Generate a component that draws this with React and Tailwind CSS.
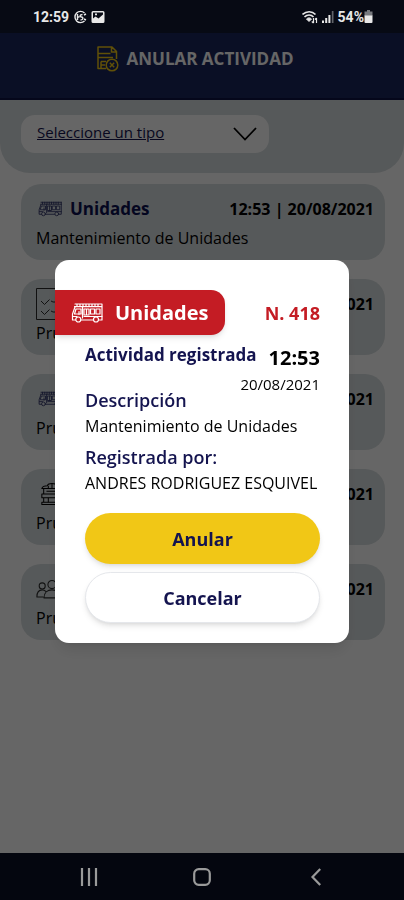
import React, { useState } from 'react';

const ACTIVITIES = [
  { id: 418, type: 'Unidades', icon: 'truck', time: '12:53', date: '20/08/2021', text: 'Mantenimiento de Unidades' },
  { id: 417, type: 'Tareas', icon: 'checklist', time: '12:50', date: '20/08/2021', text: 'Prueba' },
  { id: 416, type: 'Unidades', icon: 'truck', time: '12:47', date: '20/08/2021', text: 'Prueba' },
  { id: 415, type: 'Equipo', icon: 'station', time: '12:45', date: '20/08/2021', text: 'Prueba' },
  { id: 414, type: 'Personal', icon: 'people', time: '12:40', date: '20/08/2021', text: 'Prueba' },
];

function TruckIcon({ className }) {
  return (
    <svg viewBox="0 0 32 20" fill="none" stroke="currentColor" strokeWidth="1.2" strokeLinejoin="round" strokeLinecap="round" className={className}>
      <path d="M4 1h27M3.500 3.600H31M6 1v2.600M9 1v2.600M12 1v2.600M15 1v2.600M18 1v2.600M21 1v2.600M24 1v2.600M27 1v2.600M31 1v2.600" />
      <path d="M4 4 1.500 11v6h3M10 17h12M28 17h3V4" />
      <path d="M5 6h5v5H3.500zM13 6h5v6h-5zM19.500 6h4v5h-4zM25 6h4v5h-4zM11.500 4v11M2 13.500h4M13 13.500h18M8 8.500v3M15.500 6v6" />
      <circle cx="7.3" cy="16.5" r="2.500" />
      <circle cx="25" cy="16.5" r="2.500" />
    </svg>
  );
}

function ChecklistIcon({ className }) {
  return (
    <svg viewBox="0 0 32 32" fill="none" stroke="currentColor" strokeWidth="1" className={className}>
      <path d="M.5.5h31v31H.5z" />
      <path d="m5 13 3.500 3.500 5-5M5 23l3.500 3.500 5-5M15 13l2 1h10M15 23l2 1h10" />
    </svg>
  );
}

function StationIcon({ className }) {
  return (
    <svg viewBox="0 0 26 26" fill="none" stroke="currentColor" strokeWidth="1.1" strokeLinejoin="round" className={className}>
      <path d="M2 7c1-3 4-3 6-3 1-3 9-3 10 0 2 0 5 0 6 3zM4 7v6h18V7M2 13h22v4H2zM4 17v5h18v-5M2 22h22v2.500H2z" />
      <path d="M9 4v3M13 2v5M17 4v3M7 10h12M9 17v5M17 17v5" />
    </svg>
  );
}

function PeopleIcon({ className }) {
  return (
    <svg viewBox="0 0 36 22" fill="none" stroke="currentColor" strokeWidth="1.200" strokeLinecap="round" strokeLinejoin="round" className={className}>
      <circle cx="7" cy="7.5" r="3.4" />
      <circle cx="18" cy="6" r="4.6" />
      <circle cx="29" cy="7.5" r="3.4" />
      <path d="M9 21c0-6 4-9 9-9s9 3 9 9zM8 20H1c0-5 2-8 6-8 2 0 3 .6 4 1.6M28 20h7c0-5-2-8-6-8-2 0-3 .6-4 1.6" />
    </svg>
  );
}

function DocumentCancelIcon({ className }) {
  return (
    <svg viewBox="0 0 22 26" fill="none" stroke="currentColor" strokeWidth="1.5" strokeLinejoin="round" className={className}>
      <path d="M9 22.500H1V1h14l4.500 4.500V13M14.500 1v5h5M1 7.500h12.500M1 11.500h15M4 15.500h5M4 19h4M4 15.500v7" />
      <circle cx="15" cy="19" r="5.8" />
      <path d="m12.8 16.8 4.4 4.4m0-4.4-4.4 4.4" />
    </svg>
  );
}

function ActivityIcon({ name }) {
  if (name === 'checklist') return <ChecklistIcon className="size-8 opacity-80" />;
  if (name === 'station') return <StationIcon className="ml-1 size-6" />;
  if (name === 'people') return <PeopleIcon className="h-5 w-8 opacity-80" />;
  return <TruckIcon className="ml-0.5 h-4 w-6 text-[#0b1150] opacity-80" />;
}

function StatusBar() {
  return (
    <div className="relative z-20 flex h-[33px] items-center justify-between bg-[#070a14] pr-[31px] pl-[33px] font-[Roboto,sans-serif] text-sm font-bold text-[#e8e8e8]">
      <div className="flex items-center gap-1">
        <span>12:59</span>
        <svg viewBox="0 0 14 14" fill="none" stroke="currentColor" strokeWidth="1.4" className="size-3.5">
          <path d="M11.5 3A5.6 5.6 0 1 0 11.5 11M4.5 4v6M4.5 7h2M9.5 4.5c-3 0-3 2.5-1 2.5s2 3-1 3M11 5l2-1M11 9l2 1" />
        </svg>
        <svg viewBox="0 0 14 14" className="size-3.5">
          <path fill="currentColor" fillRule="evenodd" d="M2 1h10a1.500 1.500 0 0 1 1.500 1.500v9A1.500 1.500 0 0 1 12 13H2A1.500 1.500 0 0 1 .5 11.500v-9A1.500 1.500 0 0 1 2 1zm0 1.500v6l2.500-2L7.500 8.500l4.500-4v-2zM4 3.500h2v1.700H4z" />
        </svg>
      </div>
      <div className="flex items-center gap-1">
        <svg viewBox="0 0 16 14" fill="none" stroke="currentColor" strokeWidth="1.700" className="h-3.5 w-4">
          <path d="M.5 4.500c4-3.700 9.500-3.700 13 0M2.500 7c2.700-2.500 6.500-2.500 9 0" />
          <path d="M4.500 9c1.500-1.500 3.500-1.500 5 0L7 11.500z" fill="currentColor" strokeWidth="1" />
          <path d="M11.500 8v5M9.800 11.500l1.700 1.700M14.500 13V8M13 9.500 14.500 8" strokeWidth="1.200" />
        </svg>
        <svg viewBox="0 0 12 12" fill="currentColor" className="size-3">
          <path d="M0 9.500h2V12H0zM3.200 7h2v5h-2zM6.400 4h2v8h-2z" />
          <path d="M9.800 0h1.700v12H9.800z" opacity=".4" />
        </svg>
        <div className="flex items-center">
          <span>54%</span>
          <svg viewBox="0 0 9 13" fill="currentColor" className="h-[13px] w-[9px]">
            <path d="M3 0h3v1.500h2.500V6H.5V1.500H3z" opacity=".5" />
            <path d="M.5 5.500h8V12a1 1 0 0 1-1 1h-6a1 1 0 0 1-1-1z" />
          </svg>
        </div>
      </div>
    </div>
  );
}

function ActivityCard({ activity }) {
  return (
    <li className="h-[76px] rounded-[20px] bg-[#d8dee0] pr-[11px] pl-[15px]">
      <div className="flex h-[50px] items-center justify-between">
        <div className="flex items-center gap-2">
          <ActivityIcon name={activity.icon} />
          <h2 className="text-[17px] font-bold text-[#0b1150]">{activity.type}</h2>
        </div>
        <p className="text-base font-bold">
          {activity.time} | {activity.date}
        </p>
      </div>
      <p className="-mt-2 text-base leading-6">{activity.text}</p>
    </li>
  );
}

function CancelModal({ activity, onClose }) {
  return (
    <div className="fixed inset-0 z-10 flex items-center justify-center bg-black/60 px-[55px] pt-[3px]">
      <div role="dialog" aria-modal="true" aria-label="Anular actividad" className="w-full max-w-sm rounded-[14px] bg-white pt-[30px] pb-5 shadow-lg">
        <div className="flex items-center justify-between pr-[29px]">
          <div className="flex h-[45px] items-center gap-3 rounded-r-[14px] bg-[#c41c24] px-4 text-white shadow-md">
            <TruckIcon className="h-5 w-8" />
            <span className="text-xl font-bold">{activity.type}</span>
          </div>
          <span className="text-lg font-bold text-[#c41c24]">N. {activity.id}</span>
        </div>

        <div className="pr-[29px] pl-[30px]">
          <div className="mt-2 flex items-start justify-between">
            <h3 className="text-[17px] leading-6 font-bold whitespace-nowrap text-[#14144f]">Actividad registrada</h3>
            <div className="mt-[3px] flex flex-col items-end">
              <span className="text-xl leading-6 font-bold">{activity.time}</span>
              <span className="-ml-8 text-[15px] leading-7">{activity.date}</span>
            </div>
          </div>
          <h3 className="-mt-3 text-lg leading-7 font-semibold text-[#14144f]">Descripción</h3>
          <p className="text-base leading-6">{activity.text}</p>
          <h3 className="mt-[5px] text-lg leading-7 font-semibold text-[#14144f]">Registrada por:</h3>
          <p className="text-base leading-6 whitespace-nowrap">ANDRES RODRIGUEZ ESQUIVEL</p>

          <div className="mt-[18px] flex flex-col gap-2">
            <button type="button" onClick={onClose} className="h-[51px] rounded-full bg-[#f1c716] text-lg font-bold text-[#14144f] shadow-md">
              Anular
            </button>
            <button type="button" onClick={onClose} className="h-[51px] rounded-full border border-gray-200 bg-white text-lg font-bold text-[#14144f] shadow-md">
              Cancelar
            </button>
          </div>
        </div>
      </div>
    </div>
  );
}

export default function App() {
  const [selected, setSelected] = useState(ACTIVITIES[0]);

  return (
    <div className="flex min-h-screen flex-col bg-white font-['Open_Sans',sans-serif] text-black">
      <StatusBar />

      <header className="flex h-[67px] items-center justify-center gap-2 border-b-2 border-[#0d1245] bg-[#19265c] pr-[14px] pb-[14px] text-white">
        <DocumentCancelIcon className="h-[26px] w-[22px] text-[#f1c716]" />
        <h1 className="text-[17px] font-bold">ANULAR ACTIVIDAD</h1>
      </header>

      <div className="rounded-b-[30px] bg-[#d8dee0] px-[21px] pt-[15px] pb-5">
        <div className="relative w-[248px]">
          <select aria-label="Seleccione un tipo" className="h-[38px] w-full appearance-none rounded-[14px] bg-white pb-1 pl-4 text-[15px] text-[#14144f] underline">
            <option>Seleccione un tipo</option>
            <option>Unidades</option>
          </select>
          <svg viewBox="0 0 24 14" fill="none" stroke="currentColor" strokeWidth="1.800" className="pointer-events-none absolute top-3 right-3 h-3.5 w-6">
            <path d="m1 1 11 11.500L23 1" />
          </svg>
        </div>
      </div>

      <ul className="flex flex-1 flex-col gap-[19px] pt-[11px] pr-[19px] pl-[21px]">
        {ACTIVITIES.map((activity) => (
          <ActivityCard key={activity.id} activity={activity} />
        ))}
      </ul>

      {selected && <CancelModal activity={selected} onClose={() => setSelected(null)} />}

      {/* barra de navegación del sistema */}
      <nav className="relative z-20 grid h-[47px] grid-cols-[1fr_auto_1fr] items-center bg-[#04060f] px-20 text-[#9a9a9a]">
        <button type="button" aria-label="Recientes" className="justify-self-start">
          <svg viewBox="0 0 18 18" fill="none" stroke="currentColor" strokeWidth="2.200" className="size-[18px]">
            <path d="M2 0v18M9 0v18M16 0v18" />
          </svg>
        </button>
        <button type="button" aria-label="Inicio">
          <svg viewBox="0 0 18 18" fill="none" stroke="currentColor" strokeWidth="2.200" className="size-[18px]">
            <rect x="1.200" y="1.200" width="15.600" height="15.600" rx="4.500" />
          </svg>
        </button>
        <button type="button" aria-label="Atrás" className="justify-self-end">
          <svg viewBox="0 0 14 18" fill="none" stroke="currentColor" strokeWidth="2.200" className="h-[18px] w-3.5">
            <path d="M10.200 1 2.500 9l7.700 8" />
          </svg>
        </button>
      </nav>
    </div>
  );
}
